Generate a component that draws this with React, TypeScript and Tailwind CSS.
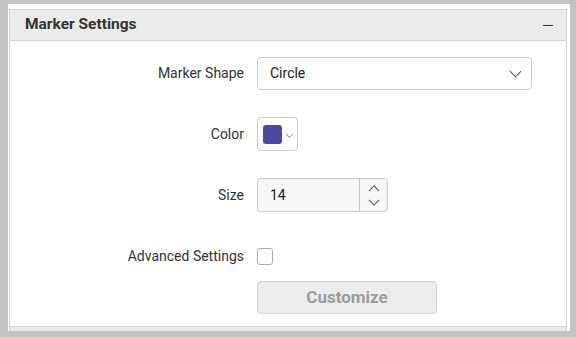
import React from "react";

const font = { fontFamily: "Roboto, 'Noto Sans', sans-serif" };

function Chevron({ className }: { className?: string }) {
  return (
    <svg viewBox="0 0 14 8" className={className} fill="none" stroke="currentColor" strokeWidth="1.2">
      <path d="M1 1l6 6 6-6" />
    </svg>
  );
}

export default function App() {
  return (
    <div className="w-[576px] h-[337px] bg-[#c3c3c3] pt-1 pl-2 pr-[6px] overflow-hidden" style={font}>
      <div className="bg-white h-[327px] pl-px pt-[5px] pr-[3px] overflow-hidden flex flex-col">
        <div className="border border-[#d4d4d4] flex flex-col h-[318px] shrink-0">
          <div className="h-[31px] bg-[#ebebeb] border-b border-[#d4d4d4] flex items-center justify-between pl-[15px] pr-[13px]">
            <span className="text-[15.5px] font-bold text-[#333]">Marker Settings</span>
            <span className="block w-[10px] h-px bg-[#333]" />
          </div>
          <div className="flex-1 pt-[16px] text-[14px] text-[#333]">
            <div className="grid grid-cols-[234px_1fr] gap-x-[13px] gap-y-[27px] items-center">
              <div className="text-right">Marker Shape</div>
              <div className="w-[275px] h-[33px] border border-[#c9c9c9] rounded-[4px] flex items-center justify-between pl-[12px] pr-[9px]">
                <span className="text-[14px] text-[#222]">Circle</span>
                <Chevron className="w-[13px] h-[8px] text-[#555]" />
              </div>

              <div className="text-right">Color</div>
              <div className="w-[41px] h-[34px] border border-[#c9c9c9] rounded-[4px] flex items-center pl-[5px]">
                <div className="w-[19px] h-[19px] rounded-[3px] bg-[#4b4aa1]" />
                <Chevron className="w-[9px] h-[5px] ml-[3px] mt-[3px] text-[#555]" />
              </div>

              <div className="text-right">Size</div>
              <div className="w-[131px] h-[34px] border border-[#c9c9c9] rounded-[4px] bg-[#f7f7f7] flex">
                <div className="flex-1 flex items-center pl-[12px] text-[14px] text-[#222]">14</div>
                <div className="w-[28px] border-l border-[#c9c9c9] flex flex-col items-center justify-center gap-[7px]">
                  <Chevron className="w-[12px] h-[7px] rotate-180 text-[#555]" />
                  <Chevron className="w-[12px] h-[7px] text-[#555]" />
                </div>
              </div>

              <div className="text-right h-[34px] flex items-center justify-end">Advanced Settings</div>
              <div className="h-[34px] flex items-center">
                <div className="w-[16px] h-[17px] border border-[#a9a9a9] rounded-[3px] bg-white" />
              </div>
            </div>
            <div className="grid grid-cols-[234px_1fr] gap-x-[13px] mt-[8px]">
              <div />
              <div className="w-[180px] h-[33px] bg-[#ececec] border border-[#cfcfcf] rounded-[4px] flex items-center justify-center text-[17px] font-bold text-[#9c9c9c]">
                Customize
              </div>
            </div>
          </div>
        </div>
        <div className="h-[10px] shrink-0 bg-[#e9e9e9] border-x border-[#d4d4d4]" />
      </div>
    </div>
  );
}
